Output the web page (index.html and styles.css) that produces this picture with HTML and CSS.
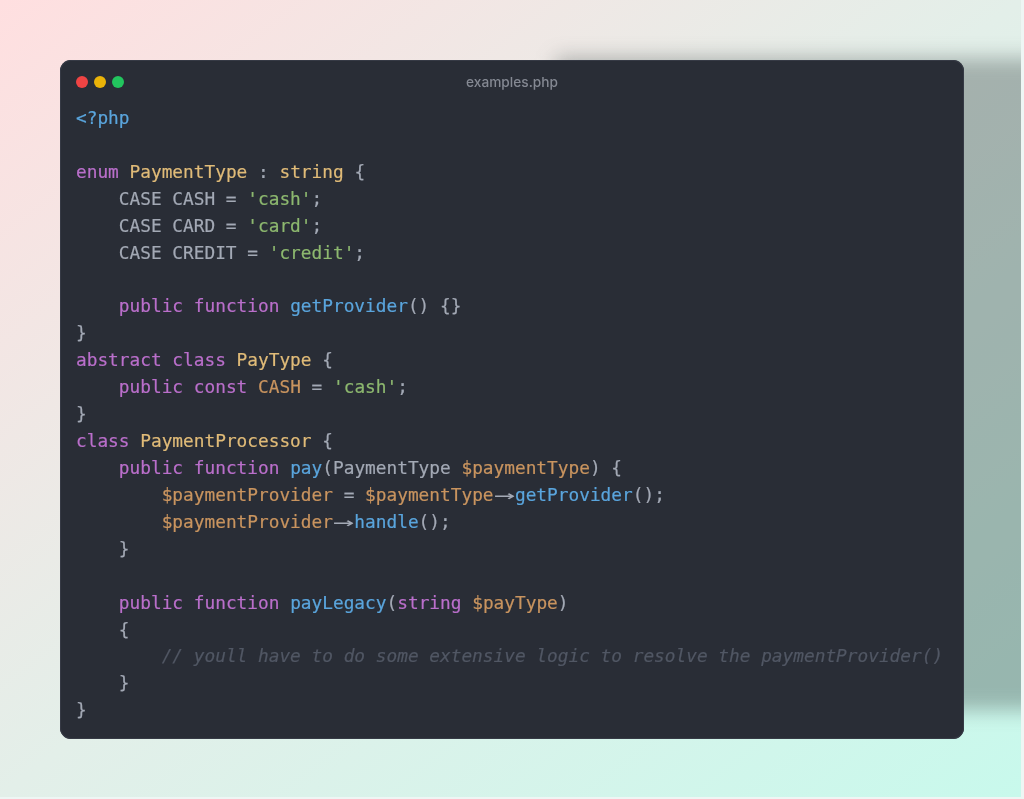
FILE: index.html
```html
<!DOCTYPE html>
<html lang="en">
<head>
<meta charset="utf-8">
<title>examples.php</title>
<link rel="stylesheet" href="styles.css">
</head>
<body>
<main class="stage">
  <div class="glow"></div>
  <section class="window">
    <header class="titlebar">
      <div class="lights"><span class="light red"></span><span class="light amber"></span><span class="light green"></span></div>
      <div class="filename">examples.php</div>
    </header>
<pre class="code"><span class="blue">&lt;?php</span>

<span class="purple">enum</span> <span class="yellow">PaymentType</span> : <span class="yellow">string</span> {
    CASE CASH = <span class="green-t">'cash'</span>;
    CASE CARD = <span class="green-t">'card'</span>;
    CASE CREDIT = <span class="green-t">'credit'</span>;

    <span class="purple">public function</span> <span class="blue">getProvider</span>() {}
}
<span class="purple">abstract class</span> <span class="yellow">PayType</span> {
    <span class="purple">public const</span> <span class="orange">CASH</span> = <span class="green-t">'cash'</span>;
}
<span class="purple">class</span> <span class="yellow">PaymentProcessor</span> {
    <span class="purple">public function</span> <span class="blue">pay</span>(PaymentType <span class="orange">$paymentType</span>) {
        <span class="orange">$paymentProvider</span> = <span class="orange">$paymentType</span><span class="arrow">→</span><span class="blue">getProvider</span>();
        <span class="orange">$paymentProvider</span><span class="arrow">→</span><span class="blue">handle</span>();
    }

    <span class="purple">public function</span> <span class="blue">payLegacy</span>(<span class="purple">string</span> <span class="orange">$payType</span>)
    {
        <span class="comment">// youll have to do some extensive logic to resolve the paymentProvider()</span>
    }
}</pre>
  </section>
</main>
</body>
</html>
```
FILE: styles.css
```css
* { box-sizing: border-box; }
html, body { margin: 0; height: 100%; background: #eef6f4; }
.stage {
  position: relative;
  width: 1021px;
  height: 797px;
  padding: 60px;
  overflow: hidden;
  background: linear-gradient(to bottom right, #ffdfe0, #e3efe9 50%, #c8f9ec);
}
.glow {
  position: absolute;
  left: 556px;
  top: 58px;
  width: 520px;
  height: 652px;
  background: rgba(60, 70, 70, .37);
  filter: blur(10px);
}
.window {
  position: relative;
  width: 904px;
  height: 679px;
  background: #292d36;
  border-radius: 11px;
  box-shadow: inset 0 0 0 1px #363a45;
}
.titlebar {
  position: relative;
  display: flex;
  align-items: center;
  justify-content: center;
  height: 44px;
  margin-bottom: 1px;
}
.lights {
  position: absolute;
  left: 16px;
  top: 16px;
  display: flex;
  gap: 6px;
}
.light { width: 12px; height: 12px; border-radius: 50%; }
.red { background: #ef4444; }
.amber { background: #eab308; }
.green { background: #22c55e; }
.filename {
  font: 500 13.7px Inter, "Liberation Sans", sans-serif;
  color: #858993;
  filter: blur(.3px);
}
.code {
  margin: 0;
  padding: 0 16px;
  font: 17.8px/26.92px "DejaVu Sans Mono", "Liberation Mono", monospace;
  -webkit-text-stroke: .2px;
  color: #a3a9b5;
  white-space: pre;
  filter: blur(.3px);
}
.blue { color: #5aa5dd; }
.purple { color: #ba6fcb; }
.yellow { color: #e0bb78; }
.green-t { color: #8db86f; }
.orange { color: #c9945f; }
.comment { color: #515764; font-style: italic; }
.arrow {
  display: inline-block;
  width: 1ch;
  margin-right: 1ch;
  transform: scaleX(2);
  transform-origin: left center;
  -webkit-text-stroke: 0;
}
```
